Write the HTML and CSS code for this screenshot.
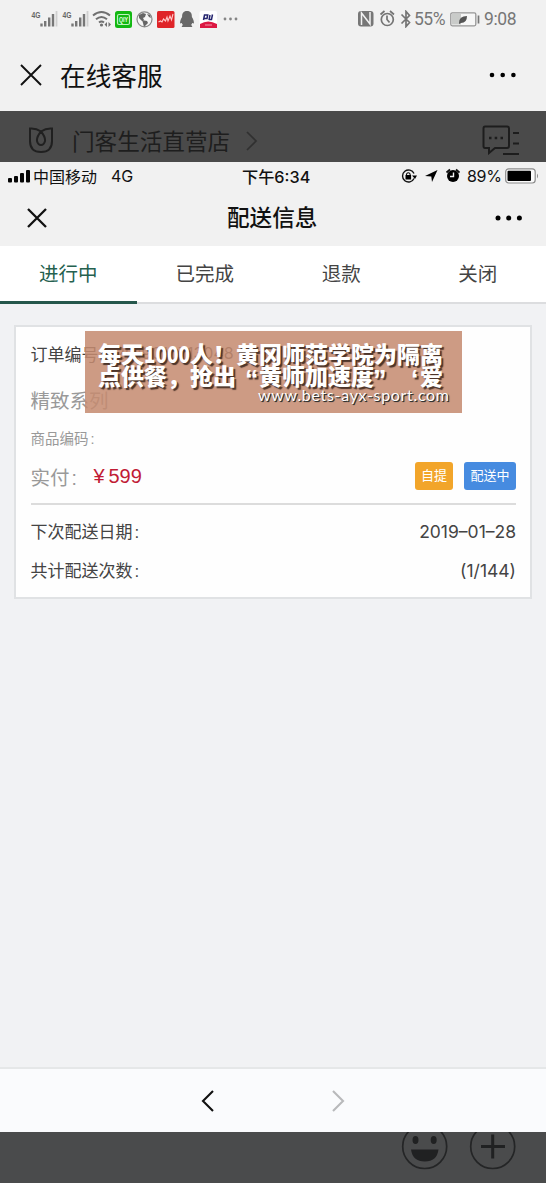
FILE: index.html
```html
<!DOCTYPE html>
<html lang="zh-CN">
<head>
<meta charset="utf-8">
<title>在线客服</title>
<link rel="stylesheet" href="styles.css">
</head>
<body>
<div class="phone">
  <header class="outer-head">
    <div class="outer-status">
      <svg class="status-icons" width="212" height="28" viewBox="28 5 212 28">
        <g fill="none" stroke="#777" stroke-width="2.4">
          <path d="M41.500 23.500v3M45.200 21v5.500M49.200 17.500v9M53 14v12.500"/>
          <path d="M72.500 23.500v3M76.200 21v5.500M80.200 17.500v9M84 14v12.500"/>
        </g>
        <path d="M56.500 11v15.500M87.500 11v15.500" stroke="#cfcfcf" stroke-width="1.800"/>
        <path d="M93 15.500q8.500-7 17 0M96 19.200q5.500-4.500 11 0M99 22.500q2.500-2 5 0" fill="none" stroke="#707070" stroke-width="2"/>
        <circle cx="101.500" cy="25" r="1.600" fill="#707070"/><path d="M104.500 24.500l2.500-2.500v5zM111 24.500l-2.500-2.500v5z" fill="#707070"/>
        <rect x="115" y="11" width="17" height="17" rx="2.500" fill="#12b812"/>
        <rect x="117.500" y="14.500" width="12" height="10" rx="1.500" fill="none" stroke="#bdf2bd" stroke-width="1.200"/>
        <circle cx="144.500" cy="19.300" r="7.500" fill="#f5f5f5" stroke="#8a8a8a" stroke-width="1.200"/>
        <path d="M139 15l4-2 3 1-1 3-2 1 1 2-2 1-3-3zM147 14l3 1 1 3-2-1zM142 20l5 1 1 2-4 4-1-4z" fill="#666"/>
        <rect x="157" y="11" width="17.500" height="17" rx="1.500" fill="#df2428"/>
        <path d="M158.500 22l2-1 1.500 1 1.500-3 2 2 1.500-4 1 4 2-5 1.500 4 1.500-6" fill="none" stroke="#ffc9c9" stroke-width="1.100"/>
        <path d="M187 11c-3.800 0-5 2.500-4.900 6-1.300 2-2.300 4.500-2 6.500l1.700-.5q.3 1 1 1.800l-1.200 2.200h10.800l-1.200-2.200q.7-.8 1-1.800l1.700.5c.3-2-.7-4.500-2-6.500.1-3.500-1.100-6-4.900-6z" fill="#686868"/>
        <rect x="199.500" y="11" width="17.500" height="17" rx="2" fill="#fff"/>
        <path d="M200 24q8-5 17 0v4h-17z" fill="#dc1742"/>
        <path d="M203.500 20l1-5h3.200l-.7 3.500h-2.500M209 20.200l1-5.200M212.500 14.500l-1 5h-3" fill="none" stroke="#24246e" stroke-width="1.500"/>
        <path d="M205 25h7" stroke="#f09aaa"/>
        <g fill="#858585"><circle cx="225" cy="19" r="1.400"/><circle cx="230.500" cy="19" r="1.400"/><circle cx="236" cy="19" r="1.400"/></g>
        <g class="tiny-text"><text x="31.500" y="18" textLength="9" lengthAdjust="spacingAndGlyphs">4G</text><text x="62.500" y="18" textLength="9" lengthAdjust="spacingAndGlyphs">4G</text></g>
        <text class="app-text" x="119" y="22" textLength="9" lengthAdjust="spacingAndGlyphs">QIY</text>
      </svg>
      <div class="outer-status-right">
        <svg width="54" height="18" viewBox="357 10 54 18">
          <rect x="358" y="11" width="15.500" height="15.500" rx="3" fill="#777"/>
          <path d="M361.500 25v-12l8.500 11v-12" fill="none" stroke="#f2f2f2" stroke-width="1.500"/>
          <g fill="none" stroke="#747474" stroke-width="1.700"><circle cx="387.300" cy="19.500" r="6"/><path d="M387 15.500v4l2.500 3M380.500 14.500l4-3.500M390 11l4 3.500M401.500 14.500l8 8-3.500 4v-15l3.500 4-8 8"/></g>
        </svg>
        <span class="pct">55%</span>
        <svg class="batt" width="30" height="16" viewBox="0 0 30 16"><rect x=".8" y="1.800" width="25" height="13" rx="1.500" fill="#f7f7f7" stroke="#969696" stroke-width="1.300"/><path d="M2 3h9v10.500H2z" fill="#c9cbc9"/><path d="M9 12q0-7 8-7 0 7-6 7l-2 1z" fill="#555"/><path d="M28.500 4.500v8" stroke="#777" stroke-width="1.700"/></svg>
        <span class="clock">9:08</span>
      </div>
    </div>
    <div class="outer-title">
      <svg class="close" width="22" height="22" viewBox="0 0 22 22"><path d="M1 1l20 20M21 1L1 21"/></svg>
      <h1>在线客服</h1>
      <svg class="more" width="28" height="6" viewBox="0 0 28 6"><circle cx="3" cy="3" r="2.300"/><circle cx="13.700" cy="3" r="2.300"/><circle cx="24.400" cy="3" r="2.300"/></svg>
    </div>
  </header>

  <div class="shop">
    <svg class="flower" width="24" height="26" viewBox="0 0 24 26"><path d="M12 4.500Q7 1 1 1.500V14q0 11 11 11t11-11V1.500Q17 1 12 4.500 7.500 10 8 14q1 4 4 4t4-4q.5-4-4-9.500" fill="none" stroke="#202020" stroke-width="2"/></svg>
    <span>门客生活直营店</span>
    <svg width="12" height="20" viewBox="0 0 12 20"><path d="M1 1l9 9-9 9" fill="none" stroke="#303030" stroke-width="1.700"/></svg>
    <svg class="chat" width="38" height="30" viewBox="0 0 38 30"><path d="M3 1.500h22q2 0 2 2V21q0 2-2 2H13l-6 5v-5H3q-1.500 0-1.500-2V3.500q0-2 1.500-2zM31 8h6M31 18.500h6M21 29h16" fill="none" stroke="#1d1d1d" stroke-width="2"/><path d="M7 13h2.500M12.700 13h2.500M18.500 13h2.500" stroke="#1d1d1d" stroke-width="2.500"/></svg>
  </div>

  <header class="inner-head">
    <div class="inner-status">
      <div class="carrier"><svg width="22" height="14" viewBox="0 0 22 14"><g fill="#050505"><rect y="9" width="4" height="4.500" rx="1"/><rect x="6" y="7" width="4" height="6.500" rx="1"/><rect x="12" y="4" width="4" height="9.500" rx="1"/><rect x="18" y="1" width="4" height="12.500" rx="1"/></g></svg><span class="operator">中国移动</span><span class="net">4G</span></div>
      <div class="time">下午6:34</div>
      <div class="inner-right">
        <svg width="60" height="18" viewBox="400 167 60 18"><path d="M414 178.500a6 6 0 1 1 0-5" fill="none" stroke="#111" stroke-width="1.400"/><path d="M412 175.500h5l-2 3.500z"/><rect x="405.500" y="175" width="5.600" height="4.500"/><path d="M406.500 175v-1q1.800-2.500 3.600 0v1" fill="none" stroke="#111" stroke-width="1.100"/><path d="M425 176l12.500-6-5.500 12-.7-5.600z"/><circle cx="453" cy="176" r="6"/><path d="M446.500 172.500l3.500-3M456 169.500l3.500 3" stroke="#111" stroke-width="1.800"/><path d="M453.500 172.500v4h-3.500" fill="none" stroke="#f2f2f2" stroke-width="1.400"/></svg>
        <span>89%</span>
        <svg class="inner-batt" width="34" height="16" viewBox="0 0 34 16"><rect x=".7" y=".8" width="29.500" height="14.200" rx="3" fill="#fafafa" stroke="#8c8c8c" stroke-width="1.200"/><rect x="2.500" y="2.700" width="23.500" height="10.400" rx="1" fill="#000"/><path d="M32 5.500q2 2.500 0 5z" fill="#888"/></svg>
      </div>
    </div>
    <div class="inner-title">
      <svg class="close bold" width="20" height="20" viewBox="0 0 20 20"><path d="M1 1l18 18M19 1L1 19"/></svg>
      <h2>配送信息</h2>
      <svg class="more" width="28" height="6" viewBox="0 0 28 6"><circle cx="3" cy="3" r="2.500"/><circle cx="13.700" cy="3" r="2.500"/><circle cx="24.400" cy="3" r="2.500"/></svg>
    </div>
  </header>

  <nav class="tabs"><div class="tab active">进行中</div><div class="tab">已完成</div><div class="tab">退款</div><div class="tab">关闭</div></nav>

  <main>
    <section class="card">
      <div class="order"><span>订单编号<i>:</i></span><span class="number">2019010713048</span></div>
      <div class="series">精致系列</div>
      <div class="code">商品编码<i>:</i></div>
      <div class="pay"><span class="paid">实付<i>:</i></span><span class="price"><b>¥</b>599</span><span class="tag pickup">自提</span><span class="tag sending">配送中</span></div>
      <div class="line next"><span>下次配送日期<i>:</i></span><span class="value">2019–01–28</span></div>
      <div class="line"><span>共计配送次数<i>:</i></span><span class="value">(1/144)</span></div>
      <aside class="banner">
        <svg width="377" height="82" viewBox="0 0 377 82">
          <g class="banner-text"><text x="13" y="32" textLength="46" lengthAdjust="spacingAndGlyphs">每天</text><text x="59" y="32" textLength="46" lengthAdjust="spacingAndGlyphs">1000</text><text x="105" y="32" textLength="46" lengthAdjust="spacingAndGlyphs">人！</text><text x="151" y="32" textLength="207" lengthAdjust="spacingAndGlyphs">黄冈师范学院为隔离</text>
          <text x="13" y="54" textLength="92" lengthAdjust="spacingAndGlyphs">点供餐，</text><text x="105" y="54" textLength="46" lengthAdjust="spacingAndGlyphs">抢出</text><text class="quote" x="160" y="58">“</text><text x="174" y="54" textLength="115" lengthAdjust="spacingAndGlyphs">黄师加速度</text><text class="quote" x="288" y="58">”</text><text class="quote" x="326" y="58">‘</text><text x="335" y="54">爱</text></g>
          <text class="site" x="173" y="70" textLength="191">www.bets-ayx-sport.com</text>
        </svg>
      </aside>
    </section>
  </main>

  <div class="browser-nav">
    <svg width="14" height="24" viewBox="0 0 14 24"><path d="M12 2L2 12l10 10" stroke="#111"/></svg>
    <svg width="14" height="24" viewBox="0 0 14 24"><path d="M2 2l10 10L2 22" stroke="#b8b9bb"/></svg>
  </div>
  <footer class="composer">
    <svg width="116" height="51" viewBox="400 1132 116 51"><g fill="none" stroke="#242526" stroke-width="1.700"><circle cx="424.700" cy="1146.500" r="22"/><circle cx="492.700" cy="1146.500" r="22"/></g><g fill="#202122"><ellipse cx="415.500" cy="1140" rx="3" ry="4"/><ellipse cx="433.700" cy="1140" rx="3" ry="4"/><path d="M411 1149.500h27.500q-1.500 12-13.700 12t-13.800-12z"/></g><path d="M481 1146.500h24M492.700 1134.500v24" stroke="#202122" stroke-width="3"/></svg>
  </footer>
</div>
</body>
</html>
```
FILE: styles.css
```css
* { box-sizing: border-box; }
body { margin: 0; font-family: "Liberation Sans", "Noto Sans CJK SC", sans-serif; }
svg { display: block; flex: none; }
h1, h2 { margin: 0; font-weight: 400; }
.phone { width: 546px; height: 1183px; display: flex; flex-direction: column; background: #f1f2f4; overflow: hidden; white-space: nowrap; }
.outer-head { height: 111px; background: #f1f1f1; flex: none; }
.outer-status { height: 38px; display: flex; align-items: center; padding: 0 29px 0 28px; justify-content: space-between; }
.outer-status-right { display: flex; align-items: center; font: 17.5px Roboto, sans-serif; color: #777; }
.pct { width: 33px; margin-left: 3px; letter-spacing: -.5px; }
.batt { margin-left: 3px; }
.clock { width: 33px; margin-left: 4px; letter-spacing: -.4px; }
.tiny-text { font: bold 9px "Liberation Sans", sans-serif; fill: #666; }
.app-text { font: bold 7px "Liberation Sans", sans-serif; fill: #e5ffe5; }
.outer-title { height: 73px; display: flex; align-items: center; padding: 0 29px 0 20px; }
.close { fill: none; stroke: #111; stroke-width: 1.9; }
.bold { stroke-width: 2.3; }
.outer-title h1 { font-size: 25.7px; line-height: 36px; margin-left: 18px; padding-top: 5px; color: #111; }
.more { margin-left: auto; fill: #000; }
.shop { height: 51px; flex: none; background: #4a4a4a; padding: 8px 26px 0 29px; display: flex; align-items: center; color: #1e1e1e; font-size: 22.6px; }
.shop .flower { margin: -2px 19px 0 0; }
.shop span { margin-right: 16px; }
.shop .chat { margin-left: auto; margin-top: -1px; }
.inner-head { height: 84px; flex: none; background: #f1f1f1; color: #111; }
.inner-status { height: 28px; display: grid; grid-template-columns: 1fr 70px 1fr; align-items: center; font: 16px Inter, "Noto Sans CJK SC", sans-serif; }
.carrier { display: flex; align-items: center; padding-left: 8px; gap: 3px; }
.net { margin-left: 11px; }
.time { padding-left: 4px; font: 500 16.2px Inter, "Noto Sans CJK SC", sans-serif; }
.inner-right { display: flex; align-items: center; justify-content: flex-end; padding-right: 7px; }
.inner-right span { width: 34px; margin-left: 7px; font-size: 16px; letter-spacing: -.3px; }
.inner-batt { margin-left: 4px; }
.inner-title { height: 56px; padding: 0 23px 0 27px; display: grid; grid-template-columns: 200px auto 1fr; align-items: center; }
.inner-title h2 { font-size: 22.6px; line-height: 32px; font-weight: 500; margin-top: 2px; }
.tabs { display: grid; grid-template-columns: repeat(4, 1fr); height: 58px; flex: none; background: #fff; border-bottom: 2px solid #dcdddf; }
.tab { display: flex; justify-content: center; align-items: center; height: 58px; padding-bottom: 5px; color: #444; font-size: 19.5px; }
.active { color: #25614f; border-bottom: 3px solid #25574b; padding-bottom: 2px; }
main { height: 763px; padding: 21px 14px; }
.card { position: relative; height: 274px; background: #fefefe; border: 2px solid #e0e2e4; padding: 9px 14px 0 14.5px; color: #444; display: flex; flex-direction: column; }
.card i { font-style: normal; margin-left: 2px; }
.order { display: flex; height: 34px; align-items: center; font-size: 17px; }
.number { margin-left: 10px; font-family: Inter, sans-serif; font-size: 16px; }
.series { height: 62px; line-height: 63px; font-size: 19.5px; color: #999; }
.code { height: 15px; line-height: 15px; font-size: 14.5px; color: #999; }
.pay { height: 58px; padding-top: 3px; display: flex; align-items: center; border-bottom: 2px solid #dcdcdc; color: #999; font-size: 19.5px; }
.paid { width: 59px; }
.price { color: #c11b35; margin-left: 4px; font-size: 20px; }
.price b { font-weight: 400; display: inline-block; width: 15px; }
.tag { height: 28px; display: flex; align-items: center; justify-content: center; border-radius: 3px; color: #fff; font-size: 13px; line-height: 18px; margin-top: -1px; }
.pickup { width: 38px; background: #f2a52a; margin-left: auto; }
.sending { width: 52px; background: #468be0; margin-left: 11px; }
.line { display: flex; justify-content: space-between; align-items: center; height: 24px; font-size: 17px; }
.line + .line { margin-top: 15px; }
.next { margin-top: 14px; }
.line > span:first-child { margin-top: -2px; }
.value { font-family: Inter, "Liberation Sans", sans-serif; font-size: 17.5px; letter-spacing: 0; }
.banner { position: absolute; left: 69px; top: 4px; width: 377px; height: 82px; background: rgba(197, 139, 112, .86); }
.banner-text { font: 900 23px "Noto Sans CJK SC", sans-serif; fill: #fff; text-shadow: 2px 2px 1px #4c3429; }
.banner-text .quote { font: bold 27px "Liberation Sans", sans-serif; }
.site { font: 16px Lato, sans-serif; fill: #fff; text-shadow: 1px 1px 1px #333, 1px 1px 0 #333; }
.browser-nav { height: 65px; flex: none; display: flex; align-items: center; justify-content: center; gap: 116px; background: #fafbfd; border-top: 2px solid #e5e7e8; }
.browser-nav path { fill: none; stroke-width: 2.1; }
.composer { height: 51px; flex: none; background: #4a4b4c; display: flex; justify-content: flex-end; padding-right: 30px; }
```
